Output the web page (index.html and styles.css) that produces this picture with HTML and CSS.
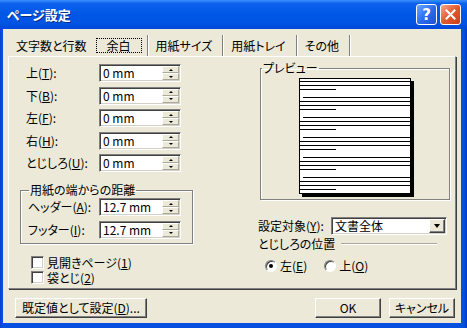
FILE: index.html
```html
<!DOCTYPE html>
<html lang="ja">
<head>
    <meta charset="UTF-8">
    <title>ページ設定</title>
    <link rel="stylesheet" href="styles.css">
</head>
<body>
<div class="window">
    <div class="titlebar">
        <span class="title">ページ設定</span>
        <div class="caption-buttons">
            <span class="cap-btn help">?</span>
            <span class="cap-btn close">
                <svg width="11" height="11" viewBox="0 0 11 11"><path d="M1.5 1.5L9.5 9.5M9.5 1.5L1.5 9.5" stroke="#fff" stroke-width="2" stroke-linecap="square"/></svg>
            </span>
        </div>
    </div>

    <div class="client">
        <!-- tab strip -->
        <div class="tabs">
            <span class="tab first">文字数と行数</span>
            <span class="tab active"><span class="focus">余白</span></span>
            <span class="tab">用紙サイズ</span>
            <span class="tab">用紙トレイ</span>
            <span class="tab">その他</span>
        </div>

        <div class="panel">
            <div class="col-left">
                <div class="field-grid margins">
                    <span class="label">上(<u>T</u>):</span>
                    <div class="spin"><span class="value">0 mm</span><span class="arrows"><i class="up"></i><i class="down"></i></span></div>
                    <span class="label">下(<u>B</u>):</span>
                    <div class="spin"><span class="value">0 mm</span><span class="arrows"><i class="up"></i><i class="down"></i></span></div>
                    <span class="label">左(<u>F</u>):</span>
                    <div class="spin"><span class="value">0 mm</span><span class="arrows"><i class="up"></i><i class="down"></i></span></div>
                    <span class="label">右(<u>H</u>):</span>
                    <div class="spin"><span class="value">0 mm</span><span class="arrows"><i class="up"></i><i class="down"></i></span></div>
                    <span class="label">とじしろ(<u>U</u>):</span>
                    <div class="spin"><span class="value">0 mm</span><span class="arrows"><i class="up"></i><i class="down"></i></span></div>
                </div>

                <fieldset class="group distance">
                    <legend>用紙の端からの距離</legend>
                    <div class="field-grid edges">
                        <span class="label">ヘッダー(<u>A</u>):</span>
                        <div class="spin"><span class="value">12.7 mm</span><span class="arrows"><i class="up"></i><i class="down"></i></span></div>
                        <span class="label">フッター(<u>I</u>):</span>
                        <div class="spin"><span class="value">12.7 mm</span><span class="arrows"><i class="up"></i><i class="down"></i></span></div>
                    </div>
                </fieldset>

                <div class="checks">
                    <div class="check-row"><span class="checkbox"></span>見開きページ(<u>1</u>)</div>
                    <div class="check-row"><span class="checkbox"></span>袋とじ(<u>2</u>)</div>
                </div>
            </div>

            <div class="col-right">
                <fieldset class="group preview">
                    <legend>プレビュー</legend>
                    <svg class="page" width="115" height="119" viewBox="0 0 115 119">
                        <rect x="3" y="3" width="112" height="116" fill="#000"/>
                        <rect x="0.5" y="0.5" width="111" height="115" fill="#fff" stroke="#000"/>
                        <path stroke="#000" fill="none" d="
                            M0 3.5H112M0 7.5H112M1 11.5H37
                            M4 19.5H112M0 23.5H112M0 27.5H112M1 31.5H37
                            M4 39.5H112M0 43.5H112M0 47.5H112M1 51.5H37
                            M4 59.5H112M0 63.5H112M0 67.5H112M1 71.5H37
                            M4 79.5H112M0 83.5H112M0 87.5H112M1 91.5H37
                            M4 99.5H112M0 103.5H112M0 107.5H112M1 111.5H37"/>
                    </svg>
                </fieldset>

                <div class="target-row">
                    <span class="label">設定対象(<u>Y</u>):</span>
                    <div class="select"><span class="value">文書全体</span><span class="drop"><i></i></span></div>
                </div>

                <div class="binding-row">
                    <span>とじしろの位置</span>
                    <span class="etched"></span>
                </div>

                <div class="radios">
                    <span class="radio-item"><span class="radio checked"></span>左(<u>E</u>)</span>
                    <span class="radio-item"><span class="radio"></span>上(<u>O</u>)</span>
                </div>
            </div>
        </div>

        <div class="footer">
            <button class="btn wide">既定値として設定(<u>D</u>)...</button>
            <button class="btn ok">OK</button>
            <button class="btn">キャンセル</button>
        </div>
    </div>
</div>
</body>
</html>
```

FILE: styles.css
```css
* {
    box-sizing: border-box;
}
body {
    margin: 0;
    font-family: "Noto Sans CJK JP", "Noto Sans", sans-serif;
    font-size: 12px;
    line-height: 14px;
    color: #000;
    font-feature-settings: "palt";
    background: #fff;
}
u {
    text-decoration-thickness: 1px;
}

/* window frame */
.window {
    width: 467px;
    height: 328px;
    display: flex;
    flex-direction: column;
    background: linear-gradient(90deg, #0a3fcf, #0650e0 2px, #0650e0 calc(100% - 3px), #0838c8);
}
.titlebar {
    height: 29px;
    flex: none;
    display: flex;
    align-items: center;
    padding: 0 6px 0 7px;
    background: linear-gradient(#3c8ffc 0%, #0d62ec 12%, #0058e6 45%, #0054e3 80%, #0347d9 100%);
}
.title {
    flex: 1;
    color: #fff;
    font-weight: bold;
    font-size: 13px;
    text-shadow: 1px 1px 0 #0a2a8c;
}
.caption-buttons {
    display: flex;
    gap: 3px;
}
.cap-btn {
    width: 21px;
    height: 21px;
    border: 1px solid #fff;
    border-radius: 3px;
    display: flex;
    align-items: center;
    justify-content: center;
    color: #fff;
    font-family: "DejaVu Sans", sans-serif;
    font-weight: bold;
    font-size: 15px;
}
.help {
    background: linear-gradient(135deg, #6aa6ff, #2a68ec 55%, #1d52d6);
}
.close {
    background: linear-gradient(135deg, #f4a88c, #e2592f 50%, #c83e1d);
}

.client {
    flex: 1;
    margin: 0 6px 5px 3px;
    background: #ece9d8;
    display: flex;
    flex-direction: column;
}

/* tabs */
.tabs {
    display: flex;
    height: 27px;
    padding: 6px 0 0 5px;
}
.tab {
    display: flex;
    align-items: center;
    padding: 0 10px 0 7px;
    border-right: 1px solid #808080;
    box-shadow: 1px 0 0 #fff;
    margin-right: 1px;
}
.tab.first {
    padding: 0 4px 0 8px;
    border-right: none;
    box-shadow: none;
}
.tab.active {
    padding: 0 5px 0 4px;
}
.focus {
    border: 1px dotted #000;
    padding: 0 10px;
    height: 15px;
    line-height: 13px;
}

/* tab page */
.panel {
    height: 233px;
    margin: 0 5px;
    border: 1px solid;
    border-color: #fff #808080 #808080 #fff;
    box-shadow: 1px 1px 0 #404040;
    display: flex;
}
.col-left {
    width: 173px;
    margin-left: 11px;
    padding-top: 7px;
}
.col-right {
    width: 192px;
    margin-left: 65px;
    padding-top: 4px;
}

.field-grid {
    display: grid;
    row-gap: 4.5px;
    align-items: center;
}
.margins {
    grid-template-columns: 73px 82px;
    padding-left: 6px;
}
.edges {
    grid-template-columns: 71px 82px;
}

/* sunken edit with spinner */
.spin, .select {
    display: flex;
    height: 18px;
    background: #fff;
    border: 1px solid;
    border-color: #808080 #fff #fff #808080;
    box-shadow: inset 1px 1px 0 #404040, inset -1px -1px 0 #d4d0c8;
    padding: 1px 1px 1px 2px;
}
.spin {
    width: 82px;
}
.value {
    flex: 1;
    line-height: 14px;
    padding-left: 1px;
}
.arrows {
    width: 17px;
    display: flex;
    flex-direction: column;
}
.arrows i {
    flex: 1;
    display: flex;
    align-items: center;
    justify-content: center;
    background: #ece9d8;
    border: 1px solid;
    border-color: #fff #aca899 #aca899 #fff;
}
.arrows .up::before,
.arrows .down::before {
    content: "";
    border-left: 2px solid transparent;
    border-right: 2px solid transparent;
}
.arrows .up::before {
    border-bottom: 2px solid #000;
}
.arrows .down::before {
    border-top: 2px solid #000;
}

/* group boxes */
.group {
    margin: 0;
    padding: 0;
    border: 1px solid #808080;
    box-shadow: inset 1px 1px 0 #fff, 1px 1px 0 #fff;
}
.group legend {
    padding: 0 1px;
    margin-left: 1px;
    line-height: 14px;
}
.distance {
    margin-top: 11px;
    padding: 1px 0 4.5px 7px;
}
.preview {
    width: 190px;
    margin-left: 2px;
    padding: 3px 0 2px;
}
.page {
    display: block;
    margin-left: 38px;
}

/* checkboxes */
.checks {
    margin-top: 11px;
    padding-left: 11px;
}
.check-row {
    display: flex;
    align-items: center;
    height: 15px;
}
.checkbox {
    width: 13px;
    height: 13px;
    margin-right: 3px;
    background: #fff;
    border: 1px solid;
    border-color: #808080 #fff #fff #808080;
    box-shadow: inset 1px 1px 0 #404040, inset -1px -1px 0 #d4d0c8;
}

/* right column */
.target-row {
    display: flex;
    align-items: center;
    margin-top: 17px;
}
.target-row .label {
    width: 73px;
}
.select {
    width: 116px;
}
.drop {
    width: 16px;
    display: flex;
    align-items: center;
    justify-content: center;
    background: #ece9d8;
    border: 1px solid;
    border-color: #fff #404040 #404040 #fff;
    box-shadow: inset -1px -1px 0 #808080;
}
.drop i {
    border-left: 3.5px solid transparent;
    border-right: 3.5px solid transparent;
    border-top: 4px solid #000;
}

.binding-row {
    display: flex;
    align-items: center;
    margin-top: 2px;
}
.etched {
    flex: 1;
    margin: 0 13px 0 6px;
    border-top: 1px solid #aca899;
    border-bottom: 1px solid #fff;
}

.radios {
    display: flex;
    margin-top: 8px;
    padding-left: 7px;
}
.radio-item {
    display: flex;
    align-items: center;
    margin-right: 17px;
}
.radio {
    width: 12px;
    height: 12px;
    margin-right: 3px;
    border-radius: 50%;
    background: #fff;
    border: 1px solid;
    border-color: #808080 #fff #fff #808080;
    box-shadow: inset 1px 1px 0 #404040;
    display: flex;
    align-items: center;
    justify-content: center;
}
.radio.checked::after {
    content: "";
    width: 4px;
    height: 4px;
    border-radius: 50%;
    background: #000;
}

/* footer buttons */
.footer {
    display: flex;
    padding: 9px 6px 0 12px;
}
.btn {
    height: 20px;
    width: 66px;
    padding: 0;
    font: inherit;
    font-feature-settings: "palt";
    line-height: 14px;
    color: #000;
    background: #ece9d8;
    border: 1px solid;
    border-color: #fff #404040 #404040 #fff;
    box-shadow: inset -1px -1px 0 #808080;
}
.btn.wide {
    width: 132px;
}
.btn.ok {
    margin-left: auto;
    margin-right: 8px;
}
```
